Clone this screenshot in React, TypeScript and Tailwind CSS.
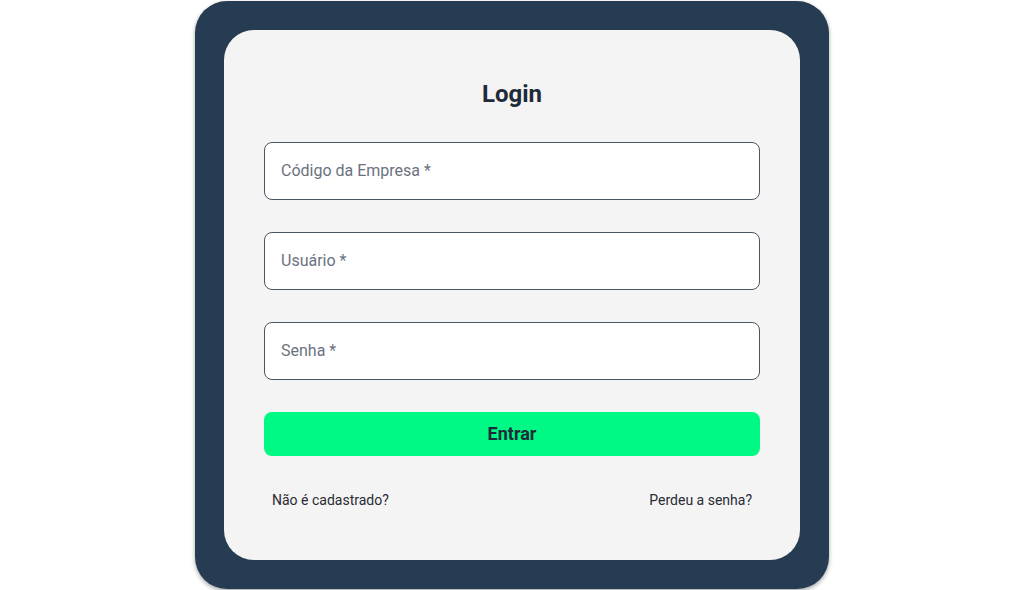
export default function App() {
  return (
    <div
      className="w-full h-[590px] bg-white flex justify-center overflow-hidden"
      style={{ fontFamily: "Roboto, 'Noto Sans', sans-serif" }}
    >
      <div className="mt-px w-[634px] h-[588px] rounded-[32px] bg-[#263c52] p-[29px] shadow-[0_2px_4px_rgba(0,0,0,0.35)]">
        <div className="h-full rounded-[30px] bg-[#f4f4f4] px-10 pt-[48px]">
          <h1 className="text-center text-2xl leading-8 font-bold text-[#1e2b38]">Login</h1>

          <form className="mt-[32px] flex flex-col gap-8" onSubmit={(e) => e.preventDefault()}>
            <input
              type="text"
              placeholder="Código da Empresa *"
              className="h-[58px] w-full rounded-lg border border-[#4a5563] bg-white px-4 pb-0.5 text-base text-gray-800 placeholder:text-[#6b7280] outline-none"
            />
            <input
              type="text"
              placeholder="Usuário *"
              className="h-[58px] w-full rounded-lg border border-[#4a5563] bg-white px-4 pb-0.5 text-base text-gray-800 placeholder:text-[#6b7280] outline-none"
            />
            <input
              type="password"
              placeholder="Senha *"
              className="h-[58px] w-full rounded-lg border border-[#4a5563] bg-white px-4 pb-0.5 text-base text-gray-800 placeholder:text-[#6b7280] outline-none"
            />
            <button
              type="submit"
              className="h-11 w-full rounded-lg bg-[#00f884] text-lg font-bold text-[#1e2b38]"
            >
              Entrar
            </button>
          </form>

          <div className="mt-[34px] flex justify-between px-2 text-sm leading-5 text-[#2a2a33]">
            <a href="#">Não é cadastrado?</a>
            <a href="#">Perdeu a senha?</a>
          </div>
        </div>
      </div>
    </div>
  );
}
